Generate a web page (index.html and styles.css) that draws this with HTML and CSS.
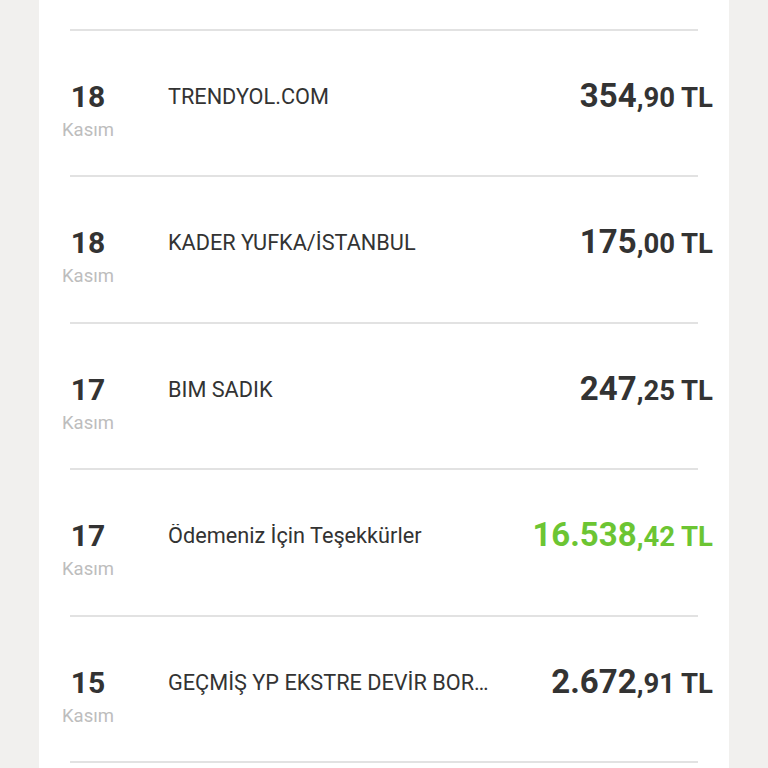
FILE: index.html
```html
<!DOCTYPE html>
<html lang="tr">
<head>
<meta charset="utf-8">
<title>Hesap Hareketleri</title>
<link rel="stylesheet" href="styles.css">
</head>
<body>
<div class="card">
  <div class="row">
    <div class="day"><div class="num">18</div><div class="month">Kasım</div></div>
    <div class="merchant">TRENDYOL.COM</div>
    <div class="amount"><span class="int">354</span><span class="dec">,90 TL</span></div>
  </div>
  <div class="row">
    <div class="day"><div class="num">18</div><div class="month">Kasım</div></div>
    <div class="merchant">KADER YUFKA/İSTANBUL</div>
    <div class="amount"><span class="int">175</span><span class="dec">,00 TL</span></div>
  </div>
  <div class="row">
    <div class="day"><div class="num">17</div><div class="month">Kasım</div></div>
    <div class="merchant">BIM SADIK</div>
    <div class="amount"><span class="int">247</span><span class="dec">,25 TL</span></div>
  </div>
  <div class="row">
    <div class="day"><div class="num">17</div><div class="month">Kasım</div></div>
    <div class="merchant">Ödemeniz İçin Teşekkürler</div>
    <div class="amount credit"><span class="int">16.538</span><span class="dec">,42 TL</span></div>
  </div>
  <div class="row">
    <div class="day"><div class="num">15</div><div class="month">Kasım</div></div>
    <div class="merchant">GEÇMİŞ YP EKSTRE DEVİR BORCU</div>
    <div class="amount"><span class="int">2.672</span><span class="dec">,91 TL</span></div>
  </div>
</div>
</body>
</html>
```

FILE: styles.css
```css
html, body {
  margin: 0;
  padding: 0;
  background: #f1f0ee;
  font-family: Roboto, "Noto Sans", sans-serif;
  color: #333;
}

.card {
  margin-left: 39px;
  width: 690px;
  background: #fff;
  padding-top: 29px;
  padding-bottom: 40px;
}

.row {
  margin: 0 31px;
  height: 146.4px;
  box-sizing: border-box;
  border-top: 2px solid #e2e2e2;
  display: flex;
  align-items: flex-start;
  padding-top: 50px;
}

.row:last-child {
  height: 148.4px;
  border-bottom: 2px solid #e2e2e2;
}

.day {
  width: 76px;
  margin-left: -20px;
  flex: none;
  text-align: center;
}

.num {
  font-size: 30px;
  line-height: 32px;
  font-weight: 700;
  color: #333;
}

.month {
  font-size: 18.5px;
  line-height: 22px;
  color: #bdbdbd;
  margin-top: 6px;
}

.merchant {
  flex: 1;
  min-width: 0;
  padding-left: 42px;
  margin-top: 4px;
  font-size: 21.7px;
  line-height: 24px;
  white-space: nowrap;
  overflow: hidden;
  text-overflow: ellipsis;
  max-width: 334px;
}

.amount {
  margin-left: auto;
  margin-right: -15px;
  flex: none;
  font-weight: 700;
  color: #333;
  white-space: nowrap;
  line-height: 40px;
  margin-top: -5px;
}

.amount .int {
  font-size: 33px;
}

.amount .dec {
  font-size: 27.5px;
}

.amount.credit {
  color: #6cc533;
}
```
